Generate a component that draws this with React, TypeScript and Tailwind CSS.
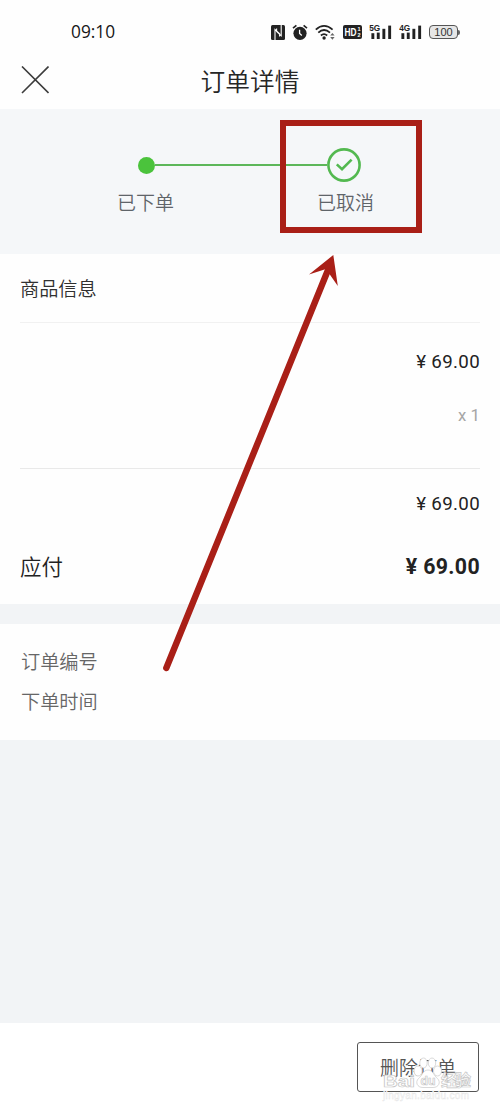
import React from 'react';

const StatusBar: React.FC = () => (
  <div className="h-[56px] flex items-center justify-between pl-[71px] pr-[40px] pt-2">
    <span className="font-['Open_Sans','Noto_Sans',sans-serif] text-[17.3px] leading-5 font-medium text-[#161616]">09:10</span>
    <div className="flex items-center gap-[7px] text-[#222]">
      {/* NFC */}
      <svg width="14" height="15" viewBox="0 0 14 15">
        <rect width="14" height="15" rx="1.5" fill="currentColor" />
        <path d="M4 15V4.6L8.6 8.8V11.4M10.2 0V10.8L5.6 6.4V3.6" fill="none" stroke="#fff" strokeWidth="1.1" />
      </svg>
      {/* Alarm */}
      <svg width="16" height="17" viewBox="0 0 16 17">
        <circle cx="8" cy="9.3" r="6.6" fill="currentColor" />
        <path d="M1 4.2 4.4 1.3M15 4.2 11.6 1.3" fill="none" stroke="currentColor" strokeWidth="1.6" />
        <path d="M7.6 5.8V9.4L9.8 11.4" fill="none" stroke="#fff" strokeWidth="1.3" />
      </svg>
      {/* Wi-Fi */}
      <svg width="21" height="17" viewBox="0 0 21 17">
        <g fill="none" stroke="currentColor" strokeWidth="1.8">
          <path d="M.8 5.6Q9 -1.8 17.6 5.6" />
          <path d="M3.3 8.6Q9 3.4 15 8.6" />
          <path d="M5.9 11.5Q9 8.8 12.2 11.5" />
        </g>
        <circle cx="9.1" cy="14" r="1.7" fill="currentColor" />
        <path d="M15.2 11.6 17.4 8.9 19.6 11.6ZM15.2 13 17.4 15.7 19.6 13Z" fill="#666" />
      </svg>
      {/* HD voice */}
      <svg width="19" height="14" viewBox="0 0 19 14" fontFamily="Liberation Sans" fontWeight="bold">
        <rect width="19" height="14" rx="2" fill="currentColor" />
        <text x="1.4" y="10.8" fontSize="10.5" textLength="12" lengthAdjust="spacingAndGlyphs" fill="#fff">HD</text>
        <text x="14.4" y="6.2" fontSize="5.5" fill="#fff">1</text>
        <text x="14.4" y="12" fontSize="5.5" fill="#fff">2</text>
      </svg>
      <Signal label="5G" />
      <Signal label="4G" />
      {/* Battery */}
      <div className="flex items-center">
        <div className="w-[29px] h-[14px] rounded-[4px] border border-[#555] bg-[#e6e6e6] flex items-center justify-center font-['Liberation_Sans',sans-serif] font-normal text-[11px] leading-[12px] text-[#333]">
          100
        </div>
        <div className="w-[2px] h-[5px] rounded-r bg-[#666]" />
      </div>
    </div>
  </div>
);

const Signal: React.FC<{ label: string }> = ({ label }) => (
  <svg width="23" height="16" viewBox="0 0 23 16" fill="currentColor">
    <text x="0.2" y="7.4" fontSize="9" fontWeight="bold" fontFamily="Liberation Sans" textLength="11" lengthAdjust="spacingAndGlyphs">{label}</text>
    <rect x="2.4" y="9.2" width="2.9" height="5.8" />
    <rect x="7.8" y="8.6" width="2.9" height="6.4" />
    <rect x="13.4" y="4.8" width="2.9" height="10.2" />
    <rect x="19.2" y="1.6" width="2.9" height="13.4" />
  </svg>
);

const NavBar: React.FC = () => (
  <header className="h-[53px] grid grid-cols-[1fr_auto_1fr] items-center px-[21px] pb-[6px]">
    <button aria-label="关闭" className="w-7 h-7">
      <svg width="28" height="28" viewBox="0 0 28 28" fill="none" stroke="#3c3c3c" strokeWidth="1.6">
        <path d="M1 .5 27.5 27M27.5 .5 1 27" />
      </svg>
    </button>
    <h1 className="text-[24.7px] leading-8 text-[#262626]">订单详情</h1>
  </header>
);

const Progress: React.FC = () => (
  <section className="relative h-[145px] bg-[#f5f7f9] pt-[39px] pl-[117px] text-[#5f6469]">
    <div className="flex items-center h-[34px] pl-[21px]">
      <div className="w-[17px] h-[17px] rounded-full bg-[#4bc33c]" />
      <div className="w-[172px] h-[2px] bg-[#5db75a]" />
      <svg width="34" height="34" viewBox="0 0 34 34" fill="none" stroke="#53b950">
        <circle cx="17" cy="17" r="15.6" strokeWidth="2.6" />
        <path d="M9.8 16.4 15 21.2 24.6 11.6" strokeWidth="2.6" />
      </svg>
    </div>
    <div className="flex gap-[143px] mt-[6px] text-[19px] leading-7">
      <span>已下单</span>
      <span>已取消</span>
    </div>
    <div className="absolute left-[280px] top-[11px] w-[142px] h-[113px] border-[6px] border-[#a91f17]" />
  </section>
);

const Goods: React.FC = () => (
  <section className="h-[350px] px-5 text-[#222]">
    <h2 className="h-[69px] border-b border-[#f1f1f1] text-[19.2px] leading-[69px] text-[#303030]">商品信息</h2>
    <div className="h-[146px] border-b border-[#e9e9e9] flex flex-col items-end pt-[25px]">
      <Price />
      <span className="mt-[25px] font-[Roboto,sans-serif] font-normal text-[16.8px] leading-7 text-[#a6a6a6]">x 1</span>
    </div>
    <div className="flex justify-end pt-[21px]">
      <Price />
    </div>
    <div className="flex items-center justify-between mt-[31px] h-9">
      <span className="text-[21.5px] pb-[2px]">应付</span>
      <span className="font-[Roboto,sans-serif] text-[21.3px] tracking-[0.35px] font-bold pb-px">¥ 69.00</span>
    </div>
  </section>
);

const Price: React.FC = () => (
  <span className="font-[Roboto,sans-serif] font-normal text-[18.7px] tracking-[0.35px] leading-7">¥ 69.00</span>
);

const Footer: React.FC = () => (
  <footer className="relative h-[88px] bg-white flex justify-end pt-[19px] pr-[21px]">
    <button className="w-[122px] h-[50px] rounded-[3px] border-[1.5px] border-[#555] text-[19px] text-[#555]">
      删除订单
    </button>
    <Watermark />
  </footer>
);

const Watermark: React.FC = () => (
  <svg className="absolute left-[376px] top-[30px]" width="110" height="50" viewBox="0 0 110 50">
    <g fill="#fff" stroke="#cfcfcf" strokeWidth="0.8">
      <ellipse cx="42" cy="18" rx="4" ry="5" />
      <ellipse cx="47.5" cy="10" rx="3.7" ry="5" />
      <ellipse cx="56" cy="10" rx="3.7" ry="5" />
      <ellipse cx="61.5" cy="18" rx="4" ry="5" />
      <path d="M52 17C47 17 46 23 42.5 25.5 39 29 41 34.5 47 34.5H57C63 34.5 65 29 61.5 25.5 58 23 57 17 52 17Z" />
      <g fontFamily="Liberation Sans" fontWeight="bold" fillOpacity="0.85" stroke="#c6c6c6" strokeWidth="0.7">
        <text x="7" y="34" fontSize="17" textLength="32" lengthAdjust="spacingAndGlyphs">Bai</text>
        <text x="44.5" y="32" fontSize="13" textLength="15" lengthAdjust="spacingAndGlyphs">du</text>
        <text x="65" y="33" fontSize="16" fontFamily="Noto Sans CJK SC" textLength="30">经验</text>
      </g>
    </g>
    <text x="7" y="46" fontSize="10" fontFamily="Liberation Sans" fill="#fff" stroke="#e4e4e4" strokeWidth="0.4" textLength="86">jingyan.baidu.com</text>
  </svg>
);

const Arrow: React.FC = () => (
  <svg className="absolute left-[150px] top-[245px] pointer-events-none" width="200" height="435" viewBox="150 245 200 435">
    <path d="M166.3 668 328 270" stroke="#a91f17" strokeWidth="6.4" strokeLinecap="round" />
    <path d="M333.3 255 309 274.5 326 269 337.8 286Z" fill="#a91f17" />
  </svg>
);

const App: React.FC = () => {
  return (
    <div className="relative w-[500px] h-[1111px] overflow-hidden flex flex-col bg-[#fefefe] font-['Noto_Sans_CJK_SC',sans-serif] font-[350]">
      <StatusBar />
      <NavBar />
      <Progress />
      <Goods />
      <div className="h-5 bg-[#f2f4f6]" />
      <section className="h-[116px] px-[21px] pt-[17px] text-[19.2px] leading-10 text-[#666]">
        <p>订单编号</p>
        <p>下单时间</p>
      </section>
      <div className="flex-1 bg-[#f2f4f6]" />
      <Footer />
      <Arrow />
    </div>
  );
};

export default App;
